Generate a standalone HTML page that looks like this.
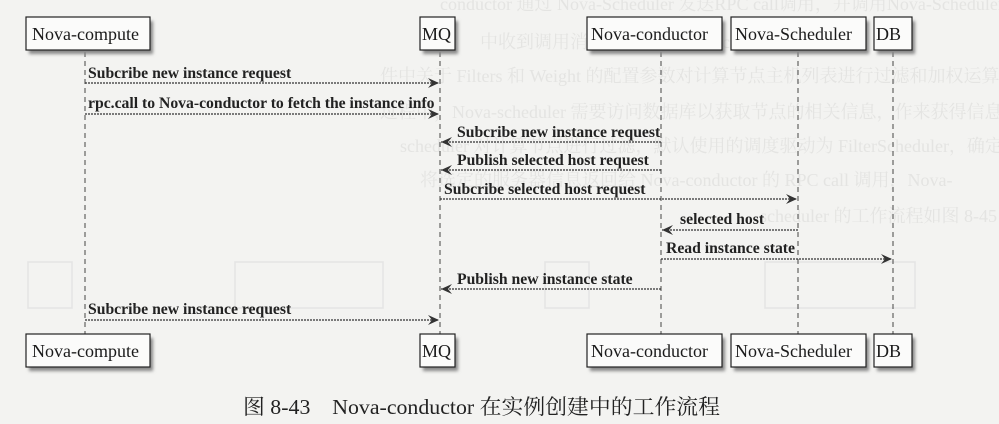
<!DOCTYPE html>
<html><head><meta charset="utf-8"><style>
html,body{margin:0;padding:0;background:#f3f3f1;}
svg{display:block}
.b{font-family:"Liberation Serif",serif;font-size:18px;fill:#1a1a1a}
.m{font-family:"Liberation Serif",serif;font-size:15.7px;font-weight:bold;fill:#222}
.bg{font-family:"Liberation Serif","Noto Serif CJK SC",serif;font-size:18px;fill:#e4e4e2}
</style></head><body>
<svg width="999" height="424" viewBox="0 0 999 424">
<defs>
<filter id="s" x="-10%" y="-10%" width="130%" height="150%"><feGaussianBlur stdDeviation="1.5"/></filter>
<marker id="a" markerWidth="12" markerHeight="10" refX="11" refY="5" orient="auto" markerUnits="userSpaceOnUse"><path d="M0,0 L11,5 L0,10 L4,5 Z" fill="#333"/></marker>
</defs>
<rect width="999" height="424" fill="#f3f3f1"/>
<text class="bg" x="440" y="10">conductor 通过 Nova-Scheduler 发送RPC call调用，并调用Nova-Scheduler的select_destin</text>
<text class="bg" x="480" y="48">中收到调用消息后，根据 nova.conf 配置</text>
<text class="bg" x="380" y="82">件中关于 Filters 和 Weight 的配置参数对计算节点主机列表进行过滤和加权运算，在这个</text>
<text class="bg" x="380" y="118">过程中，Nova-scheduler 需要访问数据库以获取节点的相关信息，作来获得信息。Nova-</text>
<text class="bg" x="400" y="152">scheduler 对计算节点进行过滤，默认使用的调度驱动为 FilterScheduler，确定选定主机</text>
<text class="bg" x="420" y="186">将选定的服务器信息返回给 Nova-conductor 的 RPC call 调用，Nova-</text>
<text class="bg" x="760" y="222">scheduler 的工作流程如图 8-45 所示</text>
<g fill="none" stroke="#e4e4e4" stroke-width="1.5">
<rect x="28" y="262" width="44" height="46"/><rect x="235" y="262" width="148" height="46"/><rect x="545" y="262" width="44" height="46"/><rect x="765" y="262" width="150" height="46"/>
</g>
<g stroke="#444" stroke-width="1" stroke-dasharray="5,4">
<line x1="85" y1="52" x2="85" y2="334"/>
<line x1="440" y1="52" x2="440" y2="334"/>
<line x1="661" y1="52" x2="661" y2="334"/>
<line x1="798" y1="52" x2="798" y2="334"/>
<line x1="893" y1="52" x2="893" y2="334"/>
</g>
<g>
<g filter="url(#s)" fill="#888">
<rect x="29" y="21" width="124" height="33"/><rect x="423" y="21" width="35" height="33"/><rect x="590" y="21" width="135" height="33"/><rect x="734" y="21" width="135" height="33"/><rect x="877" y="21" width="38" height="33"/>
<rect x="29" y="338" width="124" height="33"/><rect x="423" y="338" width="35" height="33"/><rect x="590" y="338" width="135" height="33"/><rect x="734" y="338" width="135" height="33"/><rect x="877" y="338" width="38" height="33"/>
</g>
<g fill="#fbfbfa" stroke="#222" stroke-width="1.2">
<rect x="26" y="17" width="124" height="33"/><rect x="420" y="17" width="35" height="33"/><rect x="587" y="17" width="135" height="33"/><rect x="731" y="17" width="135" height="33"/><rect x="874" y="17" width="38" height="33"/>
<rect x="26" y="334" width="124" height="33"/><rect x="420" y="334" width="35" height="33"/><rect x="587" y="334" width="135" height="33"/><rect x="731" y="334" width="135" height="33"/><rect x="874" y="334" width="38" height="33"/>
</g>
<text class="b" x="32" y="40">Nova-compute</text><text class="b" x="422" y="40">MQ</text><text class="b" x="591" y="40">Nova-conductor</text><text class="b" x="735" y="40">Nova-Scheduler</text><text class="b" x="876" y="40">DB</text>
<text class="b" x="32" y="357">Nova-compute</text><text class="b" x="422" y="357">MQ</text><text class="b" x="591" y="357">Nova-conductor</text><text class="b" x="735" y="357">Nova-Scheduler</text><text class="b" x="876" y="357">DB</text>
</g>
<g stroke="#333" stroke-width="1.3" stroke-dasharray="2,1" marker-end="url(#a)">
<line x1="85" y1="83" x2="439" y2="83"/>
<line x1="85" y1="114" x2="439" y2="114"/>
<line x1="661" y1="142" x2="441" y2="142"/>
<line x1="661" y1="170" x2="441" y2="170"/>
<line x1="440" y1="199" x2="797" y2="199"/>
<line x1="798" y1="230" x2="662" y2="230"/>
<line x1="661" y1="259" x2="892" y2="259"/>
<line x1="661" y1="289" x2="441" y2="289"/>
<line x1="85" y1="320" x2="439" y2="320"/>
</g>
<text class="m" x="88" y="78">Subcribe new instance request</text>
<text class="m" x="88" y="108">rpc.call to Nova-conductor to fetch the instance info</text>
<text class="m" x="457" y="137">Subcribe new instance request</text>
<text class="m" x="457" y="165">Publish selected host request</text>
<text class="m" x="444" y="194">Subcribe selected host request</text>
<text class="m" x="680" y="224">selected host</text>
<text class="m" x="666" y="253">Read instance state</text>
<text class="m" x="457" y="284">Publish new instance state</text>
<text class="m" x="88" y="314">Subcribe new instance request</text>
<text x="243" y="414" xml:space="preserve" textLength="477" lengthAdjust="spacingAndGlyphs" style="font-family:'Liberation Serif','Noto Serif CJK SC',serif;font-size:21px;fill:#222">图 8-43    Nova-conductor 在实例创建中的工作流程</text>
</svg>
</body></html>
